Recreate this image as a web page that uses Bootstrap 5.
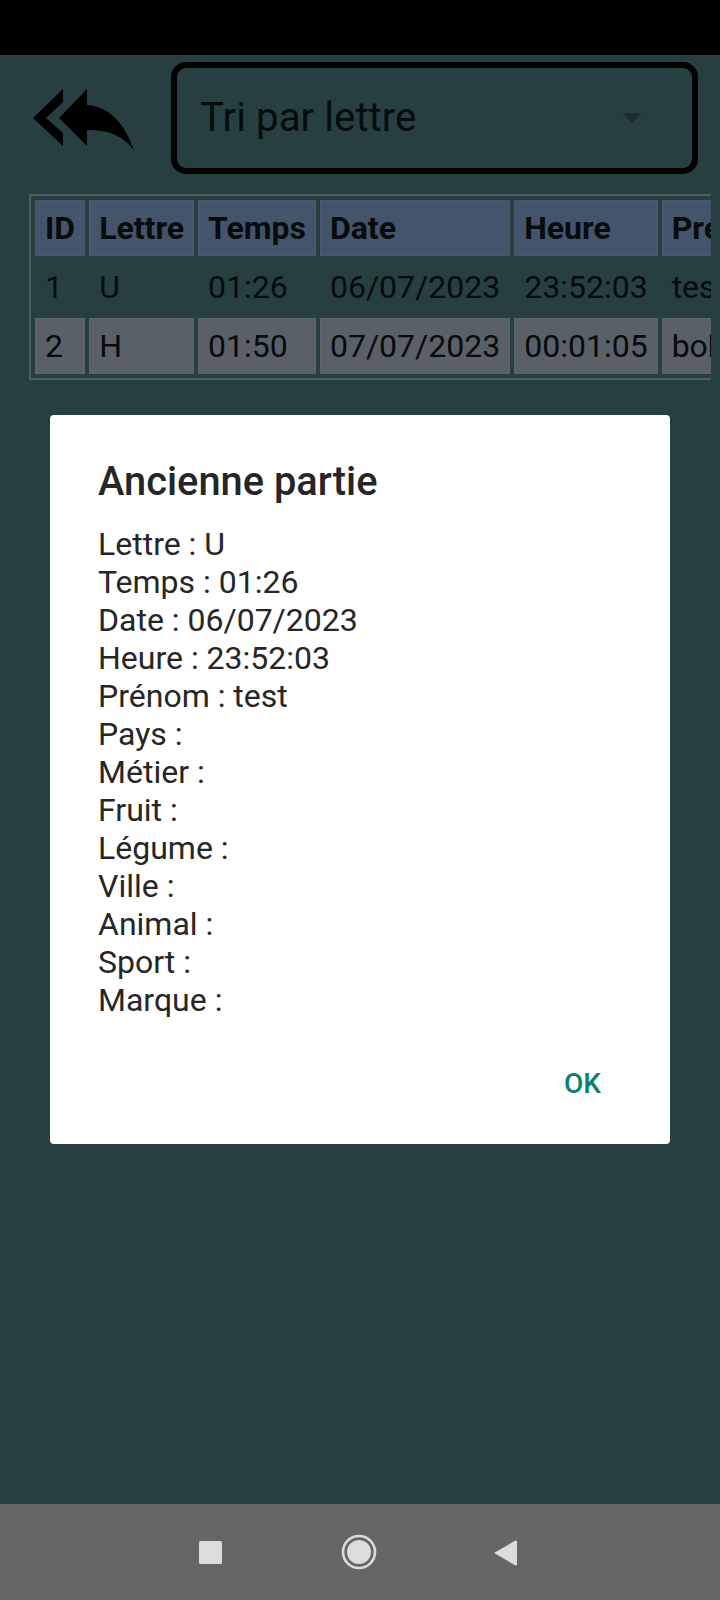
<!DOCTYPE html>
<html lang="fr">
<head>
  <meta charset="UTF-8">
  <title>Anciennes parties</title>
  <meta name="viewport" content="width=device-width, initial-scale=1">
  <link href="https://cdn.jsdelivr.net/npm/bootstrap@5.3.0/dist/css/bootstrap.min.css" rel="stylesheet">
  <style>
    body { font-family: Roboto, "Liberation Sans", sans-serif; background: #283f41; color: #060b0c; }
    .screen { height: 1600px; width: 720px; }
    .status-strip { height: 55px; background: #000; }
    .top-row { padding: 7px 22px 0 33px; height: 139px; gap: 36px; }
    .back-icon { width: 102px; height: 64px; margin-top: 27px; }
    .tri-box { width: 527px; height: 112px; border: 6px solid #000; border-radius: 15px; padding: 0 50px 0 23px; font-size: 40.3px; }
    .tri-caret { width: 0; height: 0; border-left: 10px solid transparent; border-right: 10px solid transparent; border-top: 10px solid #1d2d2f; }
    .table-clip { width: 682px; margin-left: 29px; overflow: hidden; }
    .score-table { border-collapse: separate; border-spacing: 4px; border: 2px solid #4a5f62; width: max-content; font-size: 32px; line-height: 38px; }
    .score-table th, .score-table td { padding: 8px 9px; white-space: nowrap; border: 1px solid transparent; text-align: left; }
    .score-table th { background: #44546a; border-color: #4b5a6e; font-weight: 700; }
    .score-table .plain-row td { padding-top: 7px; padding-bottom: 7px; }
    .score-table .alt-row td { background: #5a6068; border-color: #5f656c; }
    .dialog-box { left: 50px; top: 415px; width: 620px; height: 729px; border-radius: 4px; padding: 41px 48px 0; color: #262626; }
    .dialog-title { font-size: 39.8px; font-weight: 500; line-height: 52px; margin: 0 0 17px; }
    .dialog-lines { font-size: 32px; line-height: 38px; }
    .ok-btn { right: 69px; top: 653px; color: #0a8070; font-size: 28px; font-weight: 500; line-height: 32px; }
    .nav-strip { height: 96px; background: #666; }
  </style>
</head>

<body>
  <div class="screen d-flex flex-column position-relative overflow-hidden">
    <div class="status-strip"></div>

    <div class="flex-grow-1">
      <div class="top-row d-flex align-items-start">
        <svg class="back-icon flex-shrink-0" viewBox="0 0 102 64">
          <path fill="#000" d="M30 0 L0 29 L30 57 L30 44 L13 29 L30 13 Z"/>
          <path fill="#000" d="M54 0 L26 29 L54 57 L54 41 C74 41 88 45 101 61 C92 36 78 18 54 16 Z"/>
        </svg>
        <div class="tri-box d-flex align-items-center justify-content-between flex-shrink-0">
          <span>Tri par lettre</span>
          <span class="tri-caret"></span>
        </div>
      </div>

      <div class="table-clip">
        <table class="score-table">
          <thead>
            <tr><th>ID</th><th>Lettre</th><th>Temps</th><th>Date</th><th>Heure</th><th>Prénom</th></tr>
          </thead>
          <tbody>
            <tr class="plain-row"><td>1</td><td>U</td><td>01:26</td><td>06/07/2023</td><td>23:52:03</td><td>test</td></tr>
            <tr class="alt-row"><td>2</td><td>H</td><td>01:50</td><td>07/07/2023</td><td>00:01:05</td><td>bob</td></tr>
          </tbody>
        </table>
      </div>
    </div>

    <div class="nav-strip">
      <svg class="d-block" width="720" height="96" viewBox="0 0 720 96">
        <rect x="199" y="37" width="23" height="23" rx="1.5" fill="#dcdcdc"/>
        <circle cx="359" cy="48" r="16" fill="none" stroke="#dcdcdc" stroke-width="2.6"/>
        <circle cx="359" cy="48" r="12" fill="#dcdcdc"/>
        <path d="M494 49 L515.5 36.5 Q517 36 517 38 L517 60 Q517 62 515.5 61.5 Z" fill="#dcdcdc"/>
      </svg>
    </div>

    <div class="dialog-box position-absolute bg-white">
      <h2 class="dialog-title">Ancienne partie</h2>
      <div class="dialog-lines">
        <div>Lettre : U</div>
        <div>Temps : 01:26</div>
        <div>Date : 06/07/2023</div>
        <div>Heure : 23:52:03</div>
        <div>Prénom : test</div>
        <div>Pays :</div>
        <div>Métier :</div>
        <div>Fruit :</div>
        <div>Légume :</div>
        <div>Ville :</div>
        <div>Animal :</div>
        <div>Sport :</div>
        <div>Marque :</div>
      </div>
      <div class="ok-btn position-absolute">OK</div>
    </div>
  </div>

  <script src="https://cdn.jsdelivr.net/npm/bootstrap@5.3.0/dist/js/bootstrap.bundle.min.js"></script>
</body>
</html>
